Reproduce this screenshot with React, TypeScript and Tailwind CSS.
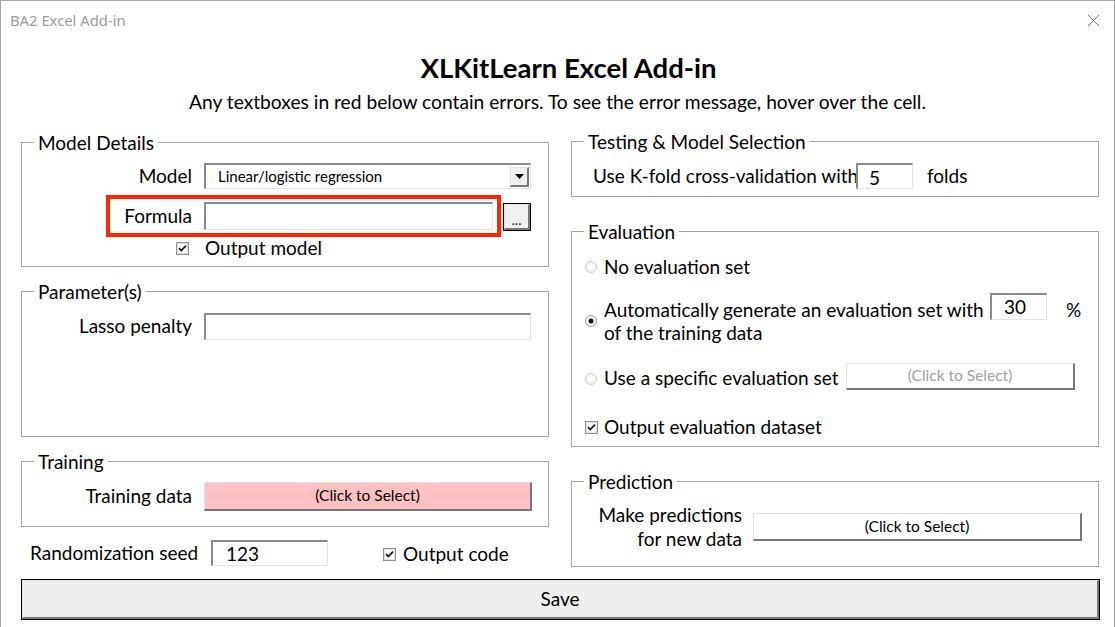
import React from "react";

function CheckBox() {
  return (
    <svg width="13" height="13" viewBox="0 0 13 13" className="shrink-0">
      <rect x="0.5" y="0.5" width="12" height="12" fill="#fff" stroke="#8f8f8f" />
      <rect x="1.5" y="1.5" width="10" height="10" fill="none" stroke="#e2e2e2" />
      <path d="M3 6.2 L5.3 8.6 L10 3.6" fill="none" stroke="#111" strokeWidth="1.7" />
    </svg>
  );
}

function Radio({ on = false }: { on?: boolean }) {
  return (
    <svg width="12" height="12" viewBox="0 0 12 12" className="shrink-0">
      <circle cx="6" cy="6" r="5.5" fill="#fff" stroke={on ? "#9a9a9a" : "#c8c8c8"} />
      <circle cx="6" cy="6" r="4.3" fill="none" stroke="#ececec" />
      {on && <circle cx="6" cy="6" r="2.5" fill="#111" />}
    </svg>
  );
}

function Group({ title, className, children }: { title: string; className: string; children?: React.ReactNode }) {
  return (
    <div className={`border border-[#a3a3a3] ${className}`}>
      <div className="-mt-[12px] ml-[12px] h-[23px] w-fit bg-white px-[4px] text-[19px] leading-[23px]">{title}</div>
      {children}
    </div>
  );
}

const inputBox =
  "border-t-2 border-l-2 border-b border-r border-t-[#8a8a8a] border-l-[#8a8a8a] border-b-[#e3e3e3] border-r-[#e3e3e3] bg-white";
const raisedBtn =
  "border-t border-l border-b-2 border-r-2 border-t-[#e3e3e3] border-l-[#e3e3e3] border-b-[#777] border-r-[#777]";

export default function App() {
  return (
    <div className="relative h-[627px] w-[1115px] overflow-hidden border-t border-l border-r border-[#a8a8a8] bg-white font-['Lato',sans-serif] text-black">
      {/* title bar */}
      <div className="flex h-[39px] items-center justify-between pl-[9px] pr-[14px]">
        <span className="font-['Noto_Sans',sans-serif] text-[14.8px] text-[#9b9b9b]">BA2 Excel Add-in</span>
        <svg width="13" height="13" viewBox="0 0 13 13">
          <path d="M1 1 L12 12 M12 1 L1 12" stroke="#777" strokeWidth="1" />
        </svg>
      </div>

      <h1 className="mt-[12px] pl-[22px] text-center text-[27.5px] font-bold leading-[32px]">XLKitLearn Excel Add-in</h1>
      <p className="mt-[6px] text-center text-[19.2px] leading-[24px]">
        Any textboxes in red below contain errors. To see the error message, hover over the cell.
      </p>

      <div className="mt-[28px] grid grid-cols-[528px_528px] gap-x-[22px] pl-[20px] text-[19px]">
        {/* left column */}
        <div className="flex flex-col">
          <Group title="Model Details" className="h-[125px]">
            <div className="mt-[9px] flex h-[26px] items-center">
              <span className="w-[170px] text-right">Model</span>
              <div className={`ml-[12px] flex h-[26px] w-[327px] items-center ${inputBox}`}>
                <span className="flex-1 pl-[12px] text-[15px]">Linear/logistic regression</span>
                <div className={`mr-[1px] flex h-[20px] w-[19px] items-center justify-center bg-[#f0f0f0] ${raisedBtn}`}>
                  <svg width="9" height="5" viewBox="0 0 9 5">
                    <path d="M0 0 H9 L4.5 5 Z" fill="#000" />
                  </svg>
                </div>
              </div>
            </div>
            <div className="mt-[6px] flex items-center">
              <div className="ml-[84px] flex h-[42px] items-center border-[4px] border-[#ff2600] pr-[4px]">
                <span className="w-[82px] text-right">Formula</span>
                <div className={`ml-[12px] h-[28px] w-[289px] ${inputBox}`} />
              </div>
              <div className="ml-[2px] mt-[2px] h-[28px] w-[28px] border border-black">
                <div className={`flex h-full w-full items-end justify-center bg-[#f0f0f0] pb-[2px] text-[14px] leading-[13px] text-[#202050] ${raisedBtn}`}>
                  ...
                </div>
              </div>
            </div>
            <div className="mt-[1px] flex h-[20px] items-center">
              <span className="ml-[154px]">
                <CheckBox />
              </span>
              <span className="ml-[16px]">Output model</span>
            </div>
          </Group>

          <Group title="Parameter(s)" className="mt-[24px] h-[146px]">
            <div className="mt-[10px] flex h-[27px] items-center">
              <span className="w-[170px] text-right">Lasso penalty</span>
              <div className={`ml-[12px] h-[27px] w-[327px] ${inputBox}`} />
            </div>
          </Group>

          <Group title="Training" className="mt-[24px] h-[66px]">
            <div className="mt-[9px] flex h-[29px] items-center">
              <span className="w-[170px] text-right">Training data</span>
              <div className={`ml-[12px] flex h-[29px] w-[328px] items-center justify-center bg-[#ffc1c1] text-[15.5px] ${raisedBtn}`}>
                (Click to Select)
              </div>
            </div>
          </Group>

          <div className="mt-[13px] flex h-[26px] items-center">
            <span className="w-[190px] whitespace-nowrap pl-[9px]">Randomization seed</span>
            <div className={`flex h-[26px] w-[117px] items-center pl-[13px] ${inputBox}`}>
              <span className="mt-[2px]">123</span>
            </div>
            <span className="ml-[55px] mt-[2px]">
              <CheckBox />
            </span>
            <span className="ml-[7px] mt-[2px]">Output code</span>
          </div>
        </div>

        {/* right column */}
        <div className="-mt-[1px] flex flex-col">
          <Group title="Testing & Model Selection" className="h-[56px]">
            <div className="mt-[10px] flex h-[26px] items-center pl-[21px]">
              <span className="w-[263px] whitespace-nowrap">Use K-fold cross-validation with</span>
              <div className={`flex h-[26px] w-[57px] items-center pl-[11px] ${inputBox}`}>
                <span className="mt-[3px]">5</span>
              </div>
              <span className="ml-[14px]">folds</span>
            </div>
          </Group>

          <Group title="Evaluation" className="mt-[34px] h-[216px]">
            <div className="mt-[13px] flex h-[22px] items-center pl-[13px]">
              <Radio />
              <span className="ml-[7px]">No evaluation set</span>
            </div>
            <div className="mt-[15px] flex items-start pl-[13px]">
              <span className="mt-[22px]">
                <Radio on />
              </span>
              <div className="ml-[7px] flex flex-col">
                <div className="flex items-start">
                  <span className="mt-[5px] w-[386px] whitespace-nowrap leading-[23px]">
                    Automatically generate an evaluation set with
                  </span>
                  <div className={`flex h-[27px] w-[57px] items-center pl-[12px] ${inputBox}`}>30</div>
                  <span className="ml-[19px] mt-[5px] leading-[23px]">%</span>
                </div>
                <span className="leading-[23px]">of the training data</span>
              </div>
            </div>
            <div className="mt-[19px] flex h-[27px] items-center pl-[13px]">
              <span className="mt-[4px]">
                <Radio />
              </span>
              <span className="ml-[7px] mt-[4px] w-[242px] whitespace-nowrap">Use a specific evaluation set</span>
              <div className={`flex h-[27px] w-[229px] items-center justify-center bg-white text-[15.5px] text-[#a0a0a0] ${raisedBtn}`}>
                (Click to Select)
              </div>
            </div>
            <div className="mt-[26px] flex h-[22px] items-center pl-[13px]">
              <CheckBox />
              <span className="ml-[6px]">Output evaluation dataset</span>
            </div>
          </Group>

          <Group title="Prediction" className="mt-[34px] h-[86px]">
            <div className="mt-[10px] flex items-center">
              <span className="w-[170px] text-right leading-[24px]">
                Make predictions
                <br />
                for new data
              </span>
              <div className={`ml-[11px] flex h-[28px] w-[329px] items-center justify-center bg-white text-[15.5px] ${raisedBtn}`}>
                (Click to Select)
              </div>
            </div>
          </Group>
        </div>
      </div>

      <div className="ml-[20px] mt-[12px] h-[41px] w-[1079px] border border-black">
        <div className={`flex h-full w-full items-center justify-center bg-[#efefef] text-[19px] ${raisedBtn}`}>Save</div>
      </div>
    </div>
  );
}
